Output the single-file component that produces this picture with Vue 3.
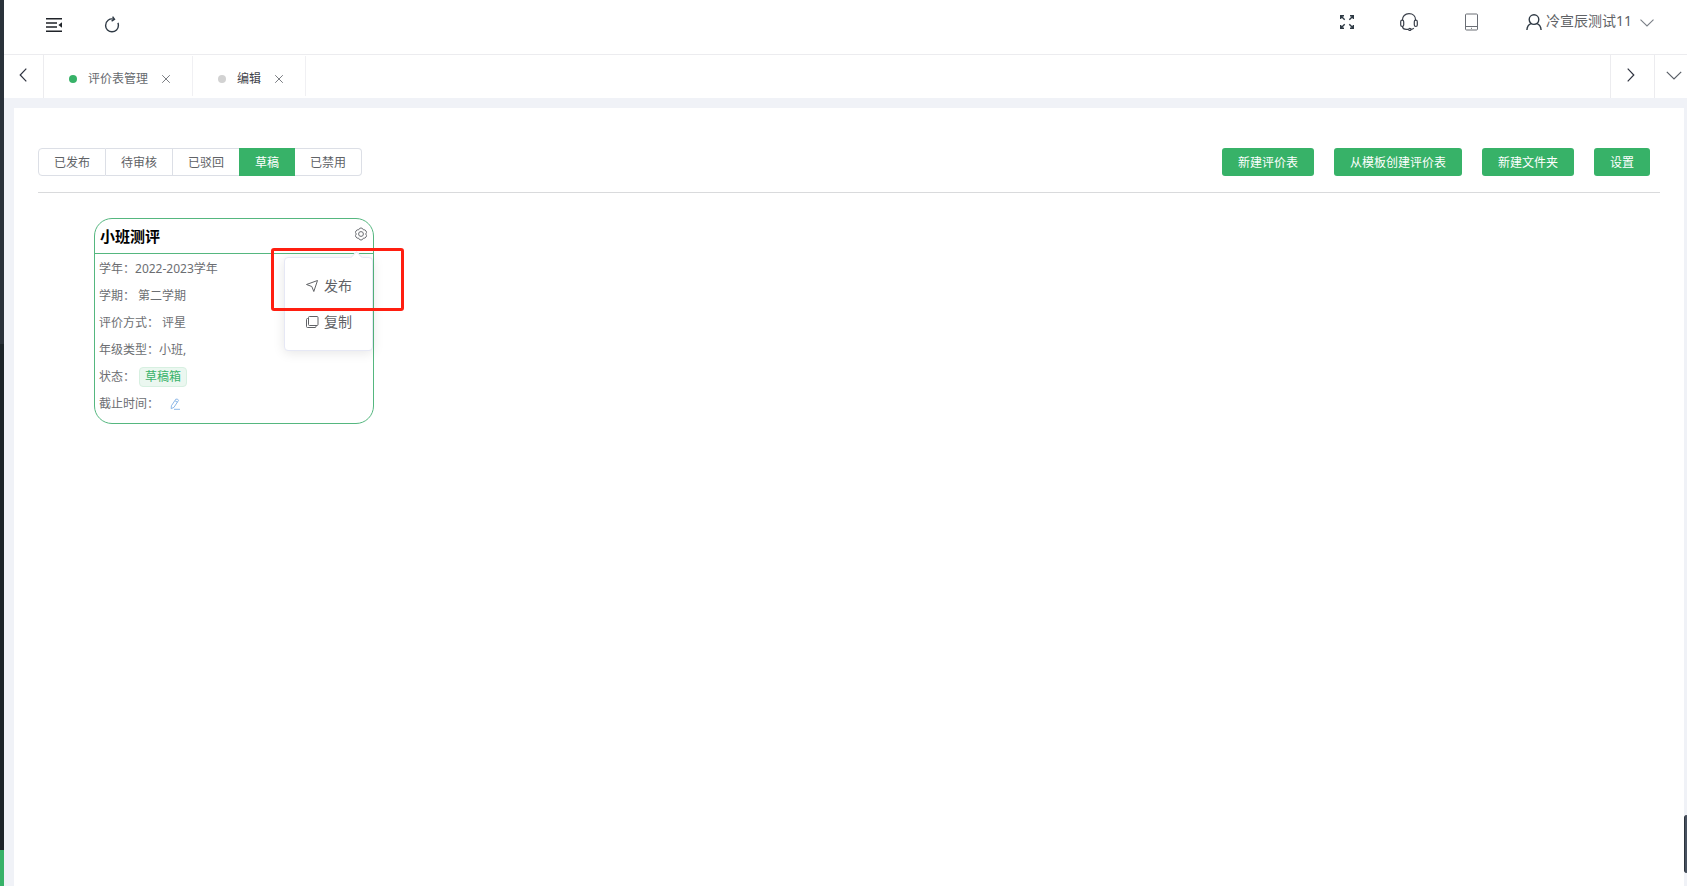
<script setup>
import { ref } from 'vue'

const statuses = ['已发布', '待审核', '已驳回', '草稿', '已禁用']
const current = ref('草稿')
const tabs = [
  { name: '评价表管理', active: true },
  { name: '编辑', active: false },
]
const actions = ['新建评价表', '从模板创建评价表', '新建文件夹', '设置']
const rows = [
  { label: '学年：', value: '2022-2023学年', gap: '' },
  { label: '学期：', value: '第二学期', gap: 'spaced' },
  { label: '评价方式：', value: '评星', gap: 'spaced' },
  { label: '年级类型：', value: '小班,', gap: '' },
]
</script>

<template>
  <div class="shell">
    <aside class="side">
      <div class="side-top"></div>
      <div class="side-mid"></div>
      <div class="side-active"></div>
    </aside>
    <div class="main">
      <header class="topbar">
        <div class="tools">
          <button class="icon-btn" aria-label="收起菜单">
            <svg width="16" height="16" viewBox="0 0 16 16" fill="none" stroke="#1f2329" stroke-width="1.5">
              <path d="M0 1.8H16M0 6H11M0 10H11M0 14.2H16" />
              <path d="M16 5.2v5.6L12.4 8z" fill="#1f2329" stroke="none" />
            </svg>
          </button>
          <button class="icon-btn" aria-label="刷新">
            <svg width="16" height="18" viewBox="0 0 16 18" fill="none" stroke="#2f3a45" stroke-width="1.4">
              <path d="M10 3.2C5.5 2 1.6 5 1.6 9.4a6.4 6.4 0 0 0 12.8 0c0-1-.2-1.800-.5-2.500" />
              <path d="M8.600.6l1.900 2.700-2.900 1.800" />
            </svg>
          </button>
        </div>
        <div class="user-tools">
          <button class="icon-btn" aria-label="全屏">
            <svg width="14" height="14" viewBox="0 0 14 14" fill="none" stroke="#2f3a45" stroke-width="1.4">
              <path d="M.7 4V.7H4M.7.7l4 4M10 .7h3.3V4M13.3.7l-4 4M.7 10v3.300H4M.7 13.3l4-4M13.3 10v3.3H10M13.3 13.3l-4-4" />
            </svg>
          </button>
          <button class="icon-btn" aria-label="客服">
            <svg width="18" height="18" viewBox="0 0 18 18" fill="none" stroke="#3a3f4a" stroke-width="1.2">
              <path d="M2.4 7.200C2.400 3.300 5 .700 9 .700s6.600 2.600 6.600 6.500" />
              <rect x=".7" y="7.2" width="3" height="6.2" rx="1.500" />
              <rect x="14.3" y="7.2" width="3" height="6.2" rx="1.500" />
              <path d="M2.400 13.400c.2 1.900 1.800 3 4 3h2M11 16.400c1.200-.1 2.200-.500 2.800-1.200" />
              <circle cx="9.800" cy="16.400" r="1.100" />
            </svg>
          </button>
          <button class="icon-btn" aria-label="移动端">
            <svg width="14" height="18" viewBox="0 0 14 18" fill="none" stroke="#6a6e75" stroke-width="1">
              <rect x="1.500" y="1" width="12" height="16" rx="1" />
              <path d="M1.500 13.500h12M7 15.300h1" />
            </svg>
          </button>
          <button class="user">
            <svg width="16" height="16" viewBox="0 0 16 16" fill="none" stroke="#2f3a45" stroke-width="1.4">
              <circle cx="8" cy="5.6" r="4.8" />
              <path d="M.9 16c.2-3.300 1.800-5.500 4.200-6.400M15.100 16c-.2-3.300-1.800-5.500-4.200-6.400" />
            </svg>
            <span>冷宣辰测试11</span>
            <svg class="caret" width="14" height="8" viewBox="0 0 14 8" fill="none" stroke="#7a7f87" stroke-width="1.1">
              <path d="M.5.7L7 7 13.500.7" />
            </svg>
          </button>
        </div>
      </header>

      <nav class="tabbar">
        <button class="nav-cell first" aria-label="向左">
          <svg width="8" height="14" viewBox="0 0 8 14" fill="none" stroke="#2f3340" stroke-width="1.2">
            <path d="M7.300.7L1.200 7l6.100 6.300" />
          </svg>
        </button>
        <div class="tabs">
          <div v-for="t in tabs" :key="t.name" class="tab" :class="{ active: t.active }">
            <a href="#"><i class="dot"></i>{{ t.name }}</a>
            <button class="close" :aria-label="'关闭' + t.name">
              <svg width="10" height="10" viewBox="0 0 10 10" fill="none" stroke="currentColor" stroke-width="1">
                <path d="M1.200 1.200l7.600 7.600M8.800 1.200L1.200 8.800" />
              </svg>
            </button>
          </div>
        </div>
        <button class="nav-cell right" aria-label="向右">
          <svg width="8" height="14" viewBox="0 0 8 14" fill="none" stroke="#2f3340" stroke-width="1.2">
            <path d="M.7.7L6.800 7 .7 13.300" />
          </svg>
        </button>
        <button class="nav-cell last" aria-label="更多">
          <svg width="16" height="9" viewBox="0 0 16 9" fill="none" stroke="#5a5f67" stroke-width="1.2">
            <path d="M.8.8L8 8l7.200-7.200" />
          </svg>
        </button>
      </nav>

      <main class="panel">
        <div class="toolbar">
          <div class="group" role="radiogroup" aria-label="状态">
            <label v-for="s in statuses" :key="s" class="seg" :class="{ on: s === current }">
              <input v-model="current" type="radio" name="status" :value="s" />{{ s }}
            </label>
          </div>
          <div class="actions">
            <button v-for="a in actions" :key="a" class="primary">{{ a }}</button>
          </div>
        </div>

        <section class="card">
          <div class="card-head">
            <h3>小班测评</h3>
            <button class="icon-btn gear" aria-label="操作">
              <svg width="14" height="14" viewBox="0 0 14 14" fill="none" stroke="#6a6d72" stroke-width="1">
                <path d="M5.400 1.500Q7 .400 8.600 1.500L9.300 2.800 10.900 2.900Q12.500 3.700 12.500 5.600L11.700 7 12.500 8.400Q12.500 10.300 10.900 11.100L9.300 11.200 8.600 12.500Q7 13.600 5.400 12.500L4.700 11.200 3.100 11.100Q1.500 10.300 1.500 8.400L2.300 7 1.500 5.600Q1.500 3.700 3.100 2.900L4.700 2.800Z" />
                <circle cx="7" cy="7" r="2.400" />
              </svg>
            </button>
          </div>
          <div class="rows">
            <p v-for="r in rows" :key="r.label">
              <span>{{ r.label }}</span><span :class="r.gap">{{ r.value }}</span>
            </p>
            <p><span>状态：</span><span class="tag">草稿箱</span></p>
            <p>
              <span>截止时间：</span>
              <button class="icon-btn edit" aria-label="编辑截止时间">
                <svg width="12" height="12" viewBox="0 0 12 12" fill="none" stroke="#8db8e8" stroke-width="1">
                  <path d="M6.800 1.200Q8.800.4 9.500 2.400L5 9.300 2.200 10.700 2.400 7.800ZM6 2.800l2.500 1.400M5 11.300H11" />
                </svg>
              </button>
            </p>
          </div>

          <div class="menu">
            <button>
              <svg width="14" height="14" viewBox="0 0 14 14" fill="none" stroke="#606266" stroke-width="1">
                <path d="M12.500 1.500L1.500 5.500 6.800 7.500 8.800 12.500z" />
              </svg>
              发布
            </button>
            <button>
              <svg width="14" height="14" viewBox="0 0 14 14" fill="none" stroke="#606266" stroke-width="1">
                <rect x="3.500" y="1.500" width="9.500" height="9" rx="1" />
                <path d="M3.500 3.500H2.500Q1.500 3.500 1.500 4.500v7Q1.500 12.500 2.500 12.500h7.500q1 0 1-1v-1" />
              </svg>
              复制
            </button>
          </div>
          <div class="mark"></div>
        </section>
      </main>
      <div class="handle"></div>
    </div>
  </div>
</template>

<style>
body {
  margin: 0;
}
</style>

<style scoped>
* {
  box-sizing: border-box;
}
.shell {
  display: flex;
  min-height: 100vh;
  background: #f0f2f7;
  color: #606266;
  font: 12px/20px "Noto Sans", "Noto Sans CJK SC", sans-serif;
}
button {
  font: inherit;
  color: inherit;
  background: none;
  border: 0;
  padding: 0;
  cursor: pointer;
}
svg {
  display: block;
  flex: none;
}
.side {
  width: 4px;
  flex: none;
  display: flex;
  flex-direction: column;
  background: #1c2429;
}
.side-top {
  height: 344px;
  background: #2a323a;
}
.side-mid {
  flex: 1;
}
.side-active {
  height: 36px;
  background: #37b268;
}
.main {
  position: relative;
  flex: 1;
  min-width: 0;
  display: flex;
  flex-direction: column;
}
.topbar {
  display: flex;
  justify-content: space-between;
  height: 55px;
  padding: 0 33px 0 42px;
  background: #fff;
  border-bottom: 1px solid #ececef;
}
.tools {
  display: flex;
  align-items: center;
  gap: 42px;
  height: 50px;
}
.user-tools {
  display: flex;
  align-items: center;
  gap: 46px;
  height: 43px;
}
.user {
  display: flex;
  align-items: center;
  gap: 4px;
  font-size: 14px;
  margin-left: 2px;
}
.user span {
  padding-bottom: 2px;
}
.caret {
  margin: 2px 0 0 4px;
}
.tabbar {
  display: flex;
  height: 43px;
  background: #fff;
}
.nav-cell {
  width: 44px;
  display: flex;
  align-items: center;
  justify-content: center;
  padding-bottom: 3px;
  border-left: 1px solid #ececef;
}
.nav-cell.first {
  width: 40px;
  padding-right: 2px;
  border-left: 0;
  border-right: 1px solid #ececef;
}
.nav-cell.right {
  padding-right: 4px;
}
.nav-cell.last {
  width: 33px;
  padding-left: 6px;
}
.tabs {
  flex: 1;
  display: flex;
  padding: 1px 0 2px;
}
.tab {
  display: flex;
  align-items: center;
  gap: 13px;
  padding: 6px 21px 0 25px;
  border-right: 1px solid #f0f0f3;
  color: #3f434a;
}
.tab.active {
  color: #66696e;
}
.tab a {
  display: flex;
  align-items: center;
  gap: 11px;
  color: inherit;
  text-decoration: none;
}
.dot {
  width: 8px;
  height: 8px;
  border-radius: 50%;
  background: #d2d2d2;
}
.active .dot {
  background: #37b268;
}
.close {
  color: #7b7e83;
}
.panel {
  flex: 1;
  margin: 10px 3px 0 10px;
  padding: 40px 24px;
  background: #fff;
}
.toolbar {
  display: flex;
  justify-content: space-between;
  padding: 0 10px 16px 0;
  border-bottom: 1px solid #d9dadc;
}
.group {
  display: flex;
}
.seg {
  height: 28px;
  padding: 0 15px;
  border: 1px solid #dcdfe6;
  border-left-width: 0;
  line-height: 28px;
  cursor: pointer;
}
.seg:first-child {
  border-left-width: 1px;
  border-radius: 4px 0 0 4px;
}
.seg:last-child {
  border-radius: 0 4px 4px 0;
}
.seg.on {
  margin-left: -1px;
  border-left-width: 1px;
  color: #fff;
  background: #37b268;
  border-color: #37b268;
}
.seg input {
  position: absolute;
  opacity: 0;
  margin: 0;
}
.actions {
  display: flex;
  gap: 20px;
}
.primary {
  height: 28px;
  padding: 2px 16px 0;
  border-radius: 3px;
  color: #fff;
  background: #37b268;
}
.card {
  position: relative;
  width: 280px;
  margin: 25px 0 0 56px;
  border: 1px solid #55b77f;
  border-radius: 18px;
}
.card-head {
  display: flex;
  justify-content: space-between;
  align-items: center;
  height: 35px;
  padding: 0 5px;
  border-bottom: 1px solid #55b77f;
}
h3 {
  margin: 0;
  font-size: 15px;
  font-weight: 700;
  color: #000;
}
.gear {
  margin-bottom: 4px;
}
.rows {
  padding: 1px 4px 6px;
}
p {
  display: flex;
  align-items: center;
  height: 27px;
  margin: 0;
  color: #6c6e72;
}
.spaced {
  margin-left: 3px;
}
.tag {
  height: 20px;
  margin-left: 4px;
  padding: 0 5px;
  line-height: 18px;
  color: #37b268;
  background: #ebf7f0;
  border: 1px solid #d7f0e1;
  border-radius: 4px;
}
.edit {
  margin-left: 10px;
}
.menu {
  position: absolute;
  top: 38px;
  right: 0;
  width: 89px;
  padding: 10px 0;
  background: #fff;
  border: 1px solid #e6e8f5;
  border-radius: 4px;
  box-shadow: 0 2px 12px rgba(0, 0, 0, 0.1);
}
.menu::before {
  content: "";
  position: absolute;
  top: -5px;
  right: 11px;
  width: 8px;
  height: 8px;
  background: #fff;
  border: solid #e6e8f5;
  border-width: 1px 0 0 1px;
  transform: rotate(45deg);
}
.menu button {
  display: flex;
  align-items: center;
  gap: 5px;
  width: 100%;
  height: 36px;
  padding: 0 20px;
  font-size: 14px;
}
.mark {
  position: absolute;
  top: 29px;
  left: 176px;
  width: 133px;
  height: 63px;
  border: 3px solid #ff1e10;
  border-radius: 3px;
  pointer-events: none;
}
.handle {
  position: absolute;
  right: 0;
  bottom: 13px;
  width: 3px;
  height: 58px;
  border-radius: 3px 0 0 3px;
  background: #485260;
  border-left: 1px solid #2c333c;
}
</style>
